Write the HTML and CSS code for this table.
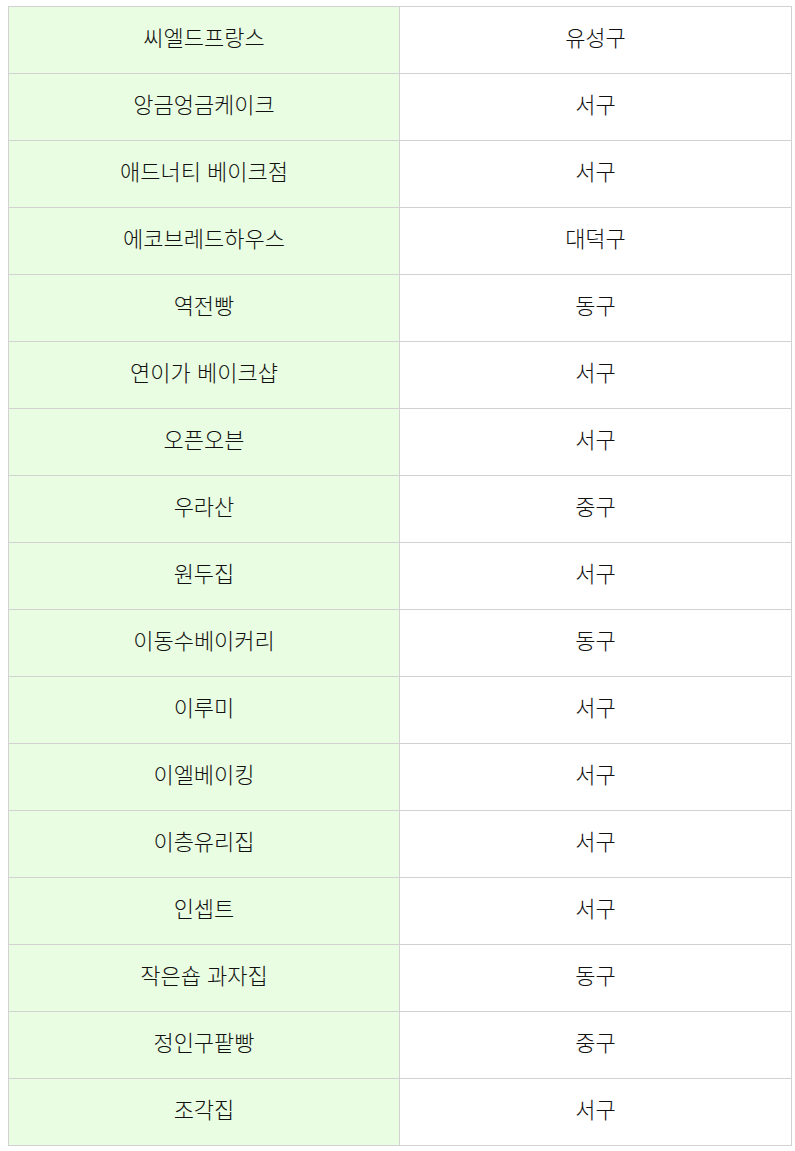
FILE: index.html
```html
<!DOCTYPE html>
<html lang="ko">
<head>
<meta charset="utf-8">
<link rel="stylesheet" href="styles.css">
</head>
<body>
<table class="shops">
<tbody>
<tr><td class="name">씨엘드프랑스</td><td class="area">유성구</td></tr>
<tr><td class="name">앙금엉금케이크</td><td class="area">서구</td></tr>
<tr><td class="name">애드너티 베이크점</td><td class="area">서구</td></tr>
<tr><td class="name">에코브레드하우스</td><td class="area">대덕구</td></tr>
<tr><td class="name">역전빵</td><td class="area">동구</td></tr>
<tr><td class="name">연이가 베이크샵</td><td class="area">서구</td></tr>
<tr><td class="name">오픈오븐</td><td class="area">서구</td></tr>
<tr><td class="name">우라산</td><td class="area">중구</td></tr>
<tr><td class="name">원두집</td><td class="area">서구</td></tr>
<tr><td class="name">이동수베이커리</td><td class="area">동구</td></tr>
<tr><td class="name">이루미</td><td class="area">서구</td></tr>
<tr><td class="name">이엘베이킹</td><td class="area">서구</td></tr>
<tr><td class="name">이층유리집</td><td class="area">서구</td></tr>
<tr><td class="name">인셉트</td><td class="area">서구</td></tr>
<tr><td class="name">작은숍 과자집</td><td class="area">동구</td></tr>
<tr><td class="name">정인구팥빵</td><td class="area">중구</td></tr>
<tr><td class="name">조각집</td><td class="area">서구</td></tr>
</tbody>
</table>
</body>
</html>
```
FILE: styles.css
```css
html, body {
  margin: 0;
  padding: 0;
  background: #ffffff;
}
body {
  padding: 6px 0 0 8px;
  font-family: "Noto Sans CJK KR", "Noto Sans", sans-serif;
  color: #111111;
}
.shops {
  border-collapse: separate;
  border-spacing: 0;
  border-top: 1px solid #d2d2d2;
  border-left: 1px solid #d2d2d2;
  table-layout: fixed;
  width: 784px;
}
.shops td {
  box-sizing: border-box;
  height: 67px;
  padding: 0 0 8px;
  border-right: 1px solid #d2d2d2;
  border-bottom: 1px solid #d2d2d2;
  text-align: center;
  vertical-align: middle;
  font-size: 22px;
  font-weight: 300;
  line-height: 26px;
}
.shops td.name {
  width: 391px;
  background: #e9fde2;
}
.shops td.area {
  width: 392px;
  background: #ffffff;
}
```
